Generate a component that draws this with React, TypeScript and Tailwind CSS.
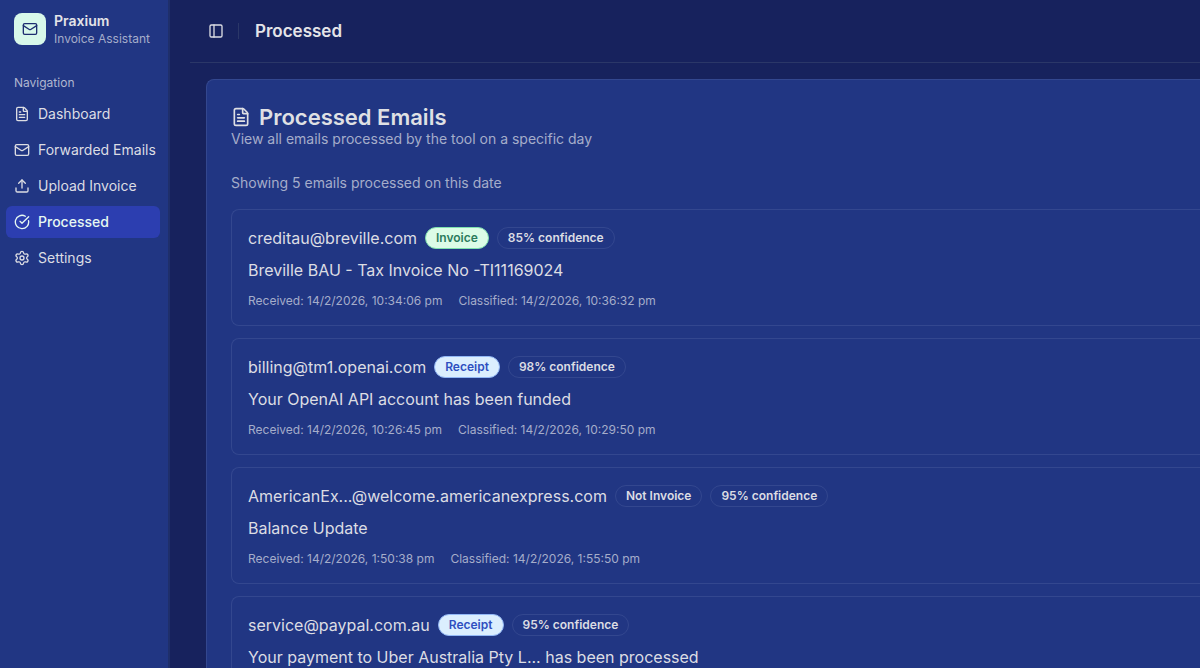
import {
  CircleCheckBig,
  FileText,
  Mail,
  PanelLeft,
  Settings,
  Upload,
} from "lucide-react";
import clsx from "clsx";

type Kind = "Invoice" | "Receipt" | "Not Invoice";

const navItems = [
  { label: "Dashboard", icon: FileText },
  { label: "Forwarded Emails", icon: Mail },
  { label: "Upload Invoice", icon: Upload },
  { label: "Processed", icon: CircleCheckBig, active: true },
  { label: "Settings", icon: Settings },
];

const emails: {
  from: string;
  kind: Kind;
  confidence: number;
  subject: string;
  received?: string;
  classified?: string;
}[] = [
  {
    from: "creditau@breville.com",
    kind: "Invoice",
    confidence: 85,
    subject: "Breville BAU - Tax Invoice No -TI11169024",
    received: "14/2/2026, 10:34:06 pm",
    classified: "14/2/2026, 10:36:32 pm",
  },
  {
    from: "billing@tm1.openai.com",
    kind: "Receipt",
    confidence: 98,
    subject: "Your OpenAI API account has been funded",
    received: "14/2/2026, 10:26:45 pm",
    classified: "14/2/2026, 10:29:50 pm",
  },
  {
    from: "AmericanEx...@welcome.americanexpress.com",
    kind: "Not Invoice",
    confidence: 95,
    subject: "Balance Update",
    received: "14/2/2026, 1:50:38 pm",
    classified: "14/2/2026, 1:55:50 pm",
  },
  {
    from: "service@paypal.com.au",
    kind: "Receipt",
    confidence: 95,
    subject: "Your payment to Uber Australia Pty L... has been processed",
  },
];

const badgeStyles: Record<Kind, string> = {
  Invoice: "border-[#7fe0ae] bg-[#dcfce7] text-[#2b7a5c]",
  Receipt: "border-[#93b8f5] bg-[#dbeefe] text-[#2f4fc0]",
  "Not Invoice": "border-[#33478f] text-[#dcdde3]",
};

const Badge = ({ className, children }: { className: string; children: React.ReactNode }) => (
  <span
    className={clsx(
      "shrink-0 rounded-full border px-[10px] py-[2px] text-xs font-semibold whitespace-nowrap",
      className
    )}
  >
    {children}
  </span>
);

const Sidebar = () => (
  <aside className="w-[170px] shrink-0 border-r-2 border-[#1f2f6b] bg-[#213683]">
    <div className="flex items-center gap-2 px-[14px] pt-[10px]">
      <div className="flex size-8 shrink-0 items-center justify-center rounded-lg bg-[#d8f8ea] text-[#1e2d70]">
        <Mail size={16} />
      </div>
      <div className="pt-[2px] whitespace-nowrap">
        <p className="text-sm leading-[18px] font-semibold text-[#e4e4e8]">Praxium</p>
        <p className="text-xs leading-[18px] text-[#a5adca]">Invoice Assistant</p>
      </div>
    </div>
    <nav className="pt-[27px] pr-2 pl-[6px]" aria-label="Navigation">
      <p className="px-2 pb-[7px] text-xs text-[#b0b7d0]">Navigation</p>
      <ul className="flex flex-col gap-1">
        {navItems.map(({ label, icon: Icon, active }) => (
          <li key={label}>
            <a
              href="#"
              aria-current={active ? "page" : undefined}
              className={clsx(
                "flex h-8 items-center gap-2 rounded-md px-2 text-sm whitespace-nowrap",
                active ? "bg-[#2c3eb0] font-medium text-[#e6f8f2]" : "text-[#dcdde3]"
              )}
            >
              <Icon size={16} className="shrink-0" />
              {label}
            </a>
          </li>
        ))}
      </ul>
    </nav>
  </aside>
);

const App = () => {
  return (
    <div className="flex h-screen overflow-hidden bg-[#17225d] font-['Inter',sans-serif]">
      <Sidebar />
      <div className="ml-5 min-w-0 flex-1">
        <header className="flex h-[63px] items-center border-b border-[#2b3768] px-[18px]">
          <button type="button" aria-label="Toggle sidebar" className="text-[#dcdde3]">
            <PanelLeft size={16} />
          </button>
          <div className="mr-4 ml-[14px] h-4 w-px bg-[#2b3768]" />
          <h1 className="text-[17px] leading-7 font-semibold text-[#e4e4e8]">Processed</h1>
        </header>

        <main className="pt-4 pl-4">
          <section className="rounded-tl-lg border-t border-l border-[#33478f] bg-[#213683] pt-[25px] pb-6 pl-6">
            <h2 className="flex items-center gap-2 text-[22px] leading-6 font-semibold text-[#dfe0e4]">
              <FileText size={20} />
              Processed Emails
            </h2>
            <p className="text-sm text-[#a5adca]">
              View all emails processed by the tool on a specific day
            </p>
            <p className="mt-6 mb-4 text-sm text-[#a5adca]">
              Showing 5 emails processed on this date
            </p>

            <ul className="flex flex-col gap-3">
              {emails.map((email) => (
                <li
                  key={email.subject}
                  className="rounded-l-lg border-y border-l border-[#33478f] p-4"
                >
                  <div className="mb-2 flex h-6 items-center gap-2">
                    <span className="text-[#dcdde3]">{email.from}</span>
                    <Badge className={badgeStyles[email.kind]}>{email.kind}</Badge>
                    <Badge className="border-[#33478f] text-[#dcdde3]">
                      {email.confidence}% confidence
                    </Badge>
                  </div>
                  <p className="mb-[11px] text-[#dcdde3]">{email.subject}</p>
                  {email.received && (
                    <div className="flex gap-4 text-xs text-[#a5adca]">
                      <span>Received: {email.received}</span>
                      <span>Classified: {email.classified}</span>
                    </div>
                  )}
                </li>
              ))}
            </ul>
          </section>
        </main>
      </div>
    </div>
  );
};

export default App;
